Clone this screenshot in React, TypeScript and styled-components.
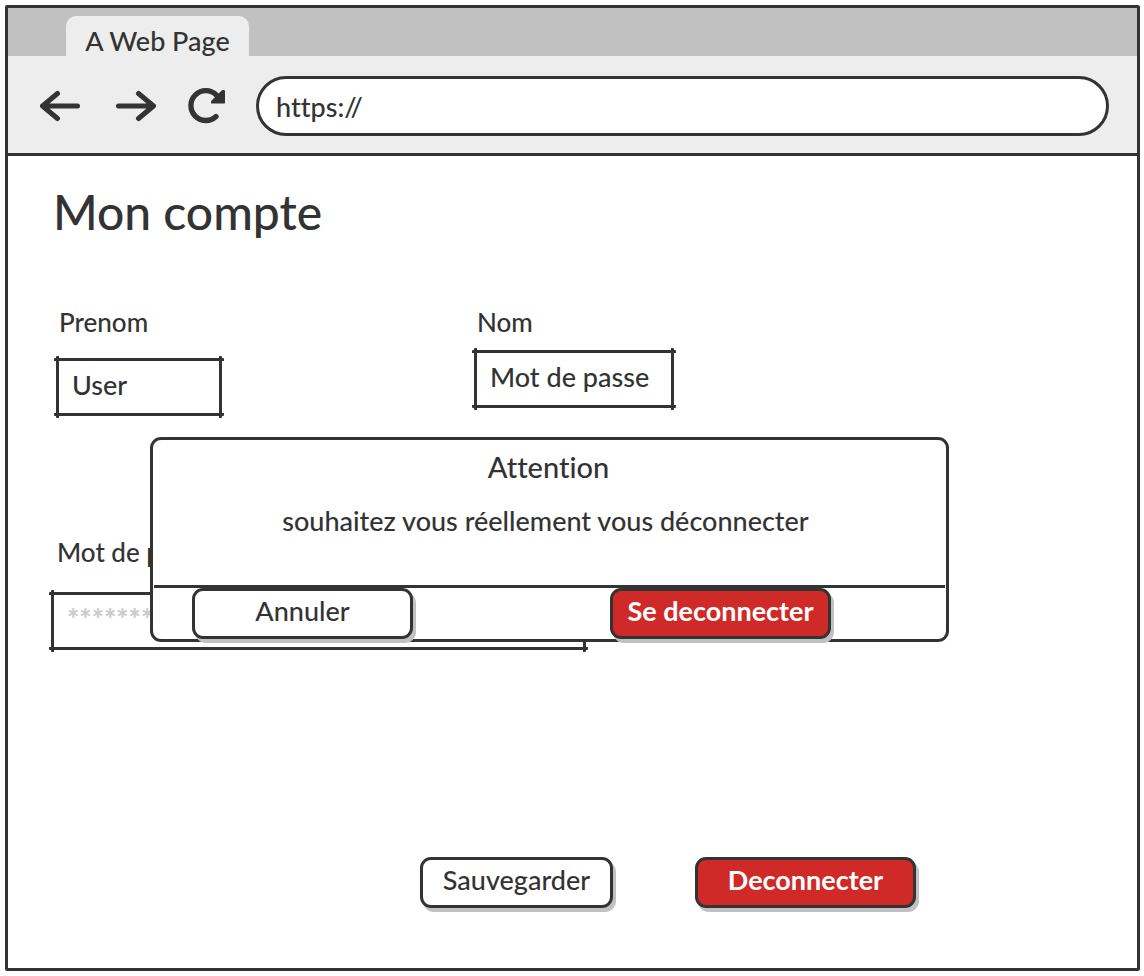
import React from "react";
import styled, { createGlobalStyle, css } from "styled-components";

const ink = "#333333";
const red = "#cf2a27";
const shadow = "#c1c1c1";

const GlobalStyle = createGlobalStyle`
  *, *::before, *::after { box-sizing: border-box; }
  body {
    margin: 0;
    background: #ffffff;
    color: ${ink};
    font: 500 27px/32px Lato, "Liberation Sans", sans-serif;
    font-variant-ligatures: none;
  }
  input, button {
    font: inherit;
    font-variant-ligatures: none;
    color: inherit;
  }
`;

const Screen = styled.div`
  display: flex;
  min-height: 100vh;
  padding: 5px 4px 5px 5px;
`;

const BrowserWindow = styled.div`
  position: relative;
  display: flex;
  flex-direction: column;
  flex: 1;
  min-width: 0;
  border: 3px solid ${ink};
  border-radius: 2px;
`;

const TabStrip = styled.div`
  display: flex;
  align-items: flex-end;
  height: 48px;
  padding-left: 58px;
  background: ${shadow};
`;

const Tab = styled.div`
  display: flex;
  align-items: center;
  justify-content: center;
  width: 183px;
  height: 40px;
  padding-top: 10px;
  border-radius: 10px 10px 0 0;
  background: #ededed;
`;

const Toolbar = styled.div`
  display: flex;
  align-items: center;
  height: 100px;
  padding: 2px 28px 0 32px;
  border-bottom: 3px solid ${ink};
  background: #ededed;
`;

const NavButtons = styled.div`
  display: flex;
  gap: 36px;
  margin-right: 30px;
`;

const IconButton = styled.button`
  display: flex;
  padding: 0;
  border: 0;
  background: none;
  cursor: pointer;
`;

const AddressBar = styled.input`
  flex: 1;
  min-width: 0;
  height: 60px;
  padding: 2px 17px 0;
  border: 3px solid ${ink};
  border-radius: 30px;
  background: #ffffff;
  outline: none;
`;

const Content = styled.main`
  display: flex;
  flex-direction: column;
  padding: 28px 43px 60px;
`;

const Title = styled.h1`
  margin: 0 0 66px;
  padding-left: 2px;
  font-size: 48px;
  font-weight: 500;
  line-height: 56px;
`;

const FieldRow = styled.div`
  display: flex;
  align-items: flex-start;
  gap: 252px;
  padding-left: 5px;
  margin-bottom: 120px;
`;

const Field = styled.div<{ $width: number; $gap: number; $indent: number }>`
  display: flex;
  flex-direction: column;
  gap: ${(p) => p.$gap}px;
  width: ${(p) => p.$width}px;

  label {
    padding-left: ${(p) => p.$indent}px;
    font-size: 26px;
  }
`;

/* Pencil-style outline: each pair of strokes runs slightly past the corners. */
const InputFrame = styled.div`
  position: relative;
  height: 58px;

  &::before,
  &::after {
    content: "";
    position: absolute;
    border: 0 solid ${ink};
    border-radius: 1px;
    pointer-events: none;
  }
  &::before {
    inset: 0 -2px;
    border-width: 3px 0;
  }
  &::after {
    inset: -2px 0;
    border-width: 0 3px;
  }
`;

const TextInput = styled.input`
  width: 100%;
  height: 100%;
  padding: 0 16px 5px;
  border: 0;
  background: transparent;
  outline: none;

  &::placeholder {
    color: #cccccc;
    font-size: 29px;
    font-weight: 900;
    opacity: 1;
  }
`;

const Button = styled.button<{ $danger?: boolean; $width: number }>`
  width: ${(p) => p.$width}px;
  height: 51px;
  padding: 0 0 6px;
  border: 3px solid ${ink};
  border-radius: 11px;
  background: #ffffff;
  box-shadow: 3px 4px 0 ${shadow};
  white-space: nowrap;
  cursor: pointer;
  ${(p) =>
    p.$danger &&
    css`
      background: ${red};
      color: #ffffff;
      font-weight: 700;
    `}
`;

const PageActions = styled.div`
  display: flex;
  gap: 82px;
  padding-left: 369px;
  margin-top: 207px;
`;

const Dialog = styled.div`
  position: absolute;
  top: 429px;
  left: 142px;
  right: 188px;
  border: 3px solid ${ink};
  border-radius: 11px;
  background: #ffffff;
  text-align: center;
`;

const DialogTitle = styled.h2`
  margin: 0;
  padding: 11px 2px 0 0;
  font-size: 29px;
  font-weight: 500;
  line-height: 32px;
`;

const DialogMessage = styled.p`
  margin: 0;
  padding: 22px 8px 48px 0;
`;

const DialogActions = styled.div`
  display: flex;
  justify-content: space-between;
  height: 54px;
  margin: 0 1px;
  padding: 0 114px 0 38px;
  border-top: 3px solid ${ink};
`;

const ArrowIcon = ({ flip = false }: { flip?: boolean }) => (
  <svg width="40" height="36" viewBox="0 0 40 36" fill="none" stroke={ink} strokeWidth="5" strokeLinecap="round" strokeLinejoin="round" aria-hidden="true">
    {flip ? <path d="M2.500 18H37M22.500 5.500L37.500 18L22.500 30.500" /> : <path d="M37.500 18H3M17.500 5.500L2.500 18L17.500 30.500" />}
  </svg>
);

const ReloadIcon = () => (
  <svg width="34" height="36" viewBox="4 0 34 36" fill="none" overflow="visible" aria-hidden="true">
    <path d="M28 28.500A14.900 14.900 0 1 1 28.500 7.200" stroke={ink} strokeWidth="5.300" strokeLinecap="round" />
    <path d="M35.800 3.200V14.400H24.200V13.600L34.800 3.200Z" fill={ink} stroke={ink} strokeWidth="2.400" strokeLinejoin="round" />
  </svg>
);

export default function App() {
  return (
    <>
      <GlobalStyle />
      <Screen>
        <BrowserWindow>
          <TabStrip>
            <Tab>A Web Page</Tab>
          </TabStrip>
          <Toolbar>
            <NavButtons>
              <IconButton type="button" aria-label="Back"><ArrowIcon /></IconButton>
              <IconButton type="button" aria-label="Forward"><ArrowIcon flip /></IconButton>
              <IconButton type="button" aria-label="Reload"><ReloadIcon /></IconButton>
            </NavButtons>
            <AddressBar type="text" aria-label="Address" defaultValue="https://" />
          </Toolbar>
          <Content>
            <Title>Mon compte</Title>
            <FieldRow>
              <Field $width={166} $gap={20} $indent={3}>
                <label htmlFor="prenom">Prenom</label>
                <InputFrame>
                  <TextInput id="prenom" type="text" defaultValue="User" />
                </InputFrame>
              </Field>
              <Field $width={200} $gap={12} $indent={3}>
                <label htmlFor="nom">Nom</label>
                <InputFrame>
                  <TextInput id="nom" type="text" defaultValue="Mot de passe" />
                </InputFrame>
              </Field>
            </FieldRow>
            <Field $width={535} $gap={24} $indent={6}>
              <label htmlFor="password">Mot de passe</label>
              <InputFrame>
                <TextInput id="password" type="password" placeholder="********" />
              </InputFrame>
            </Field>
            <PageActions>
              <Button type="button" $width={193}>Sauvegarder</Button>
              <Button type="button" $width={221} $danger>Deconnecter</Button>
            </PageActions>
          </Content>
          <Dialog role="dialog" aria-labelledby="dialog-title" aria-describedby="dialog-message">
            <DialogTitle id="dialog-title">Attention</DialogTitle>
            <DialogMessage id="dialog-message">souhaitez vous réellement vous déconnecter</DialogMessage>
            <DialogActions>
              <Button type="button" $width={221}>Annuler</Button>
              <Button type="button" $width={221} $danger>Se deconnecter</Button>
            </DialogActions>
          </Dialog>
        </BrowserWindow>
      </Screen>
    </>
  );
}
